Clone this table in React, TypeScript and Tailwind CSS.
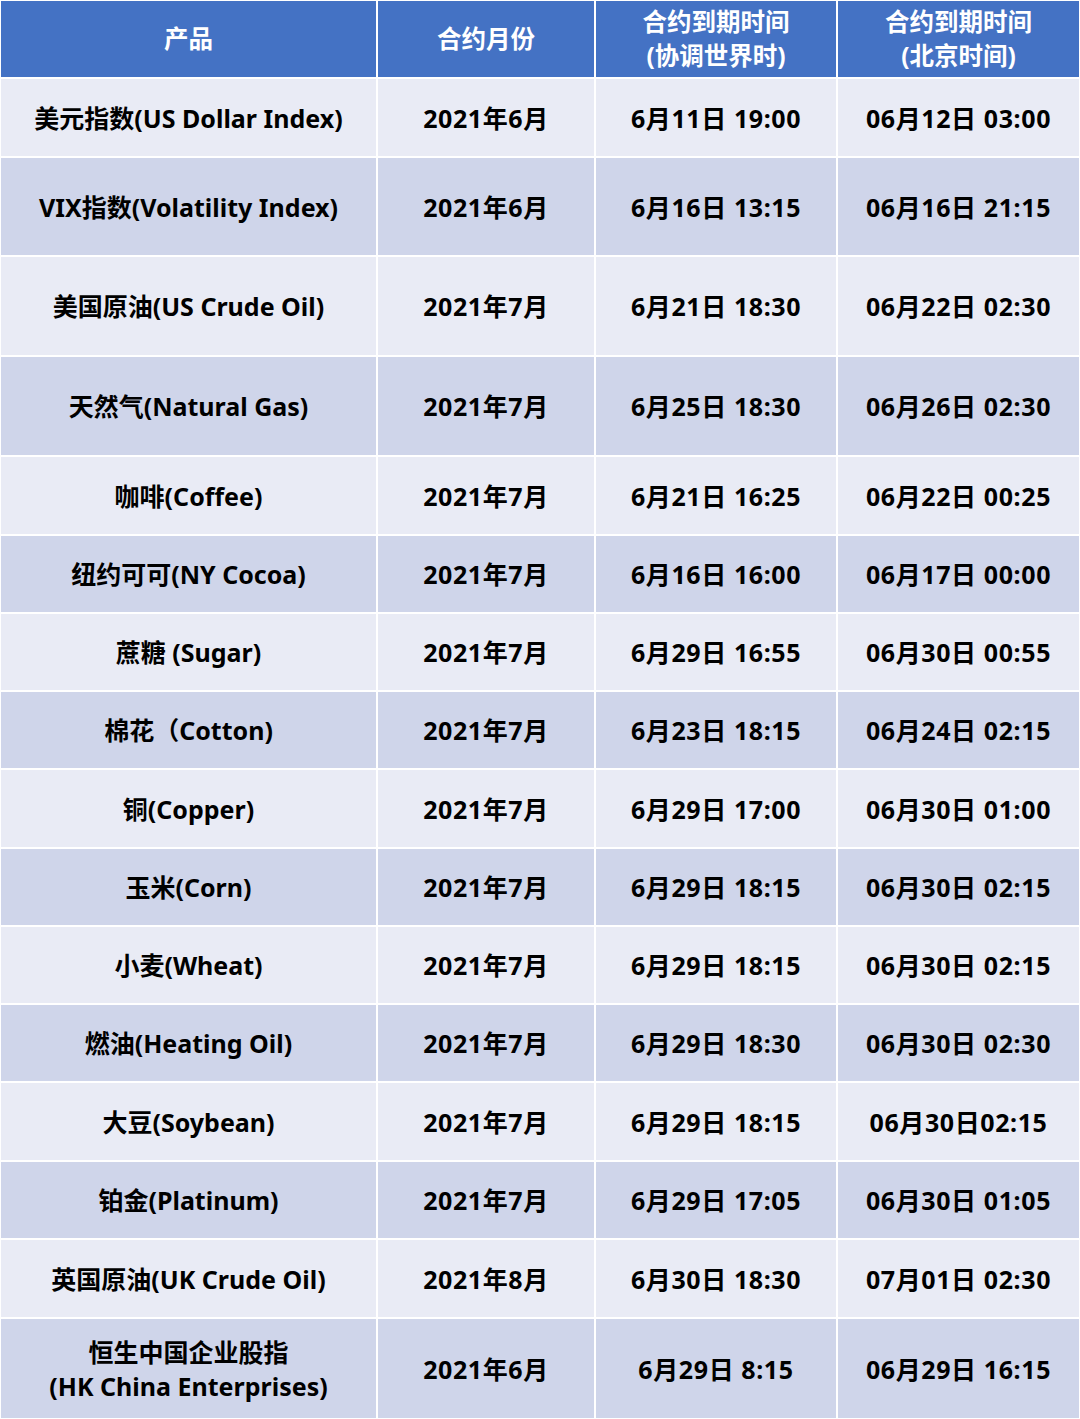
// App.tsx — contract expiry table
type Row = {
  name: React.ReactNode;
  month: string;
  utc: string;
  bj: string;
  h: string;
};

const rows: Row[] = [
  { name: "美元指数(US Dollar Index)", month: "2021年6月", utc: "6月11日 19:00", bj: "06月12日 03:00", h: "h-[77px]" },
  { name: "VIX指数(Volatility Index)", month: "2021年6月", utc: "6月16日 13:15", bj: "06月16日 21:15", h: "h-[97px]" },
  { name: "美国原油(US Crude Oil)", month: "2021年7月", utc: "6月21日 18:30", bj: "06月22日 02:30", h: "h-[98px]" },
  { name: "天然气(Natural Gas)", month: "2021年7月", utc: "6月25日 18:30", bj: "06月26日 02:30", h: "h-[98px]" },
  { name: "咖啡(Coffee)", month: "2021年7月", utc: "6月21日 16:25", bj: "06月22日 00:25", h: "h-[77px]" },
  { name: "纽约可可(NY Cocoa)", month: "2021年7月", utc: "6月16日 16:00", bj: "06月17日 00:00", h: "h-[76px]" },
  { name: "蔗糖 (Sugar)", month: "2021年7月", utc: "6月29日 16:55", bj: "06月30日 00:55", h: "h-[76px]" },
  { name: "棉花（Cotton)", month: "2021年7月", utc: "6月23日 18:15", bj: "06月24日 02:15", h: "h-[76px]" },
  { name: "铜(Copper)", month: "2021年7月", utc: "6月29日 17:00", bj: "06月30日 01:00", h: "h-[77px]" },
  { name: "玉米(Corn)", month: "2021年7月", utc: "6月29日 18:15", bj: "06月30日 02:15", h: "h-[76px]" },
  { name: "小麦(Wheat)", month: "2021年7月", utc: "6月29日 18:15", bj: "06月30日 02:15", h: "h-[76px]" },
  { name: "燃油(Heating Oil)", month: "2021年7月", utc: "6月29日 18:30", bj: "06月30日 02:30", h: "h-[76px]" },
  { name: "大豆(Soybean)", month: "2021年7月", utc: "6月29日 18:15", bj: "06月30日02:15", h: "h-[77px]" },
  { name: "铂金(Platinum)", month: "2021年7月", utc: "6月29日 17:05", bj: "06月30日 01:05", h: "h-[76px]" },
  { name: "英国原油(UK Crude Oil)", month: "2021年8月", utc: "6月30日 18:30", bj: "07月01日 02:30", h: "h-[77px]" },
  {
    name: (
      <>
        恒生中国企业股指
        <br />
        (HK China Enterprises)
      </>
    ),
    month: "2021年6月",
    utc: "6月29日 8:15",
    bj: "06月29日 16:15",
    h: "h-[99px]",
  },
];

const font = "font-['Noto_Sans','Noto_Sans_CJK_SC',sans-serif]";

function Cell({ children, bg }: { children: React.ReactNode; bg: string }) {
  return (
    <div className={`${bg} flex items-center justify-center text-center text-[25px] leading-[34px] tracking-[0.6px] font-bold text-black`}>
      {children}
    </div>
  );
}

export default function App() {
  return (
    <div className={`w-[1080px] h-[1419px] bg-white p-[1px] ${font}`}>
      <div className="grid grid-cols-[375px_216px_240px_241px] gap-[2px]">
        {/* Header */}
        {[
          ["产品"],
          ["合约月份"],
          ["合约到期时间", "(协调世界时)"],
          ["合约到期时间", "(北京时间)"],
        ].map((lines, i) => (
          <div
            key={i}
            className="h-[76px] bg-[#4472c4] flex flex-col items-center justify-center text-white font-bold text-[24.5px] leading-[34px]"
          >
            {lines.map((l) => (
              <span key={l}>{l}</span>
            ))}
          </div>
        ))}

        {rows.map((r, i) => {
          const bg = i % 2 === 0 ? "bg-[#e9ebf5]" : "bg-[#cfd5ea]";
          return (
            <div key={i} className="contents">
              <div className={`${r.h} ${bg} flex items-center justify-center text-center text-[25px] leading-[34px] font-bold text-black`}>
                <span>{r.name}</span>
              </div>
              <Cell bg={bg}>{r.month}</Cell>
              <Cell bg={bg}>{r.utc}</Cell>
              <Cell bg={bg}>{r.bj}</Cell>
            </div>
          );
        })}
      </div>
    </div>
  );
}
